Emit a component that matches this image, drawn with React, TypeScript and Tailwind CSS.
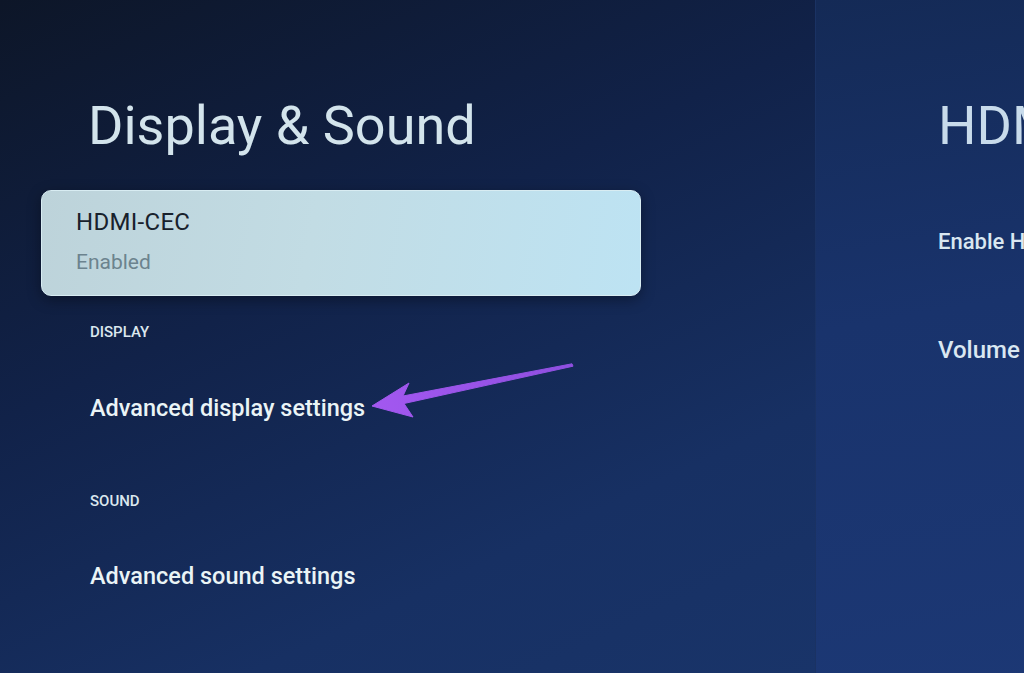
import React from "react";

export default function App() {
  return (
    <div
      className="relative flex h-[673px] w-[1024px] overflow-hidden"
      style={{ fontFamily: "Roboto, 'Noto Sans', sans-serif" }}
    >
      {/* Left panel */}
      <div className="flex w-[815px] shrink-0 flex-col bg-[linear-gradient(155deg,#0d1628_0%,#112249_40%,#173063_75%,#193469_100%)] pl-[41px] pt-[96px]">
        <h1 className="pl-[47px] text-[54px] font-normal leading-[60px] text-[#d3e4ec]">
          Display &amp; Sound
        </h1>

        <div className="mt-[34px] flex h-[106px] w-[600px] flex-col rounded-[10px] border border-[#d8ecf2] bg-[linear-gradient(100deg,#bdd3da_0%,#c2dce4_45%,#bde3f3_100%)] px-[34px] pt-[17px] shadow-[0_4px_14px_rgba(0,0,0,0.35)]">
          <div className="text-[24px] leading-[28px] tracking-[0.3px] text-[#18212c]">HDMI-CEC</div>
          <div className="mt-[12px] text-[21px] leading-[28px] text-[#6c838e]">Enabled</div>
        </div>

        <div className="pl-[49px]">
          <div className="mt-[26px] text-[15px] font-medium leading-[20px] text-[#dbe7ee]">DISPLAY</div>
          <div className="mt-[52px] text-[23.5px] font-medium leading-[28px] text-[#eaf4f6]">
            Advanced display settings
          </div>
          <div className="mt-[69px] text-[15px] font-medium leading-[20px] text-[#dbe7ee]">SOUND</div>
          <div className="mt-[51px] text-[23.5px] font-medium leading-[28px] text-[#eaf4f6]">
            Advanced sound settings
          </div>
        </div>
      </div>

      {/* Right panel */}
      <div className="flex flex-1 flex-col border-l border-[#1a3263] bg-[linear-gradient(170deg,#142a56_0%,#19336c_45%,#1c3875_100%)] pl-[122px] pt-[96px] whitespace-nowrap">
        <div className="text-[54px] leading-[60px] text-[#c8dbeb]">HDMI-CEC</div>
        <div className="mt-[72px] text-[22px] font-medium leading-[28px] text-[#dae7f1]">Enable HDMI-CEC</div>
        <div className="mt-[80px] text-[24px] font-medium leading-[28px] text-[#dae7f1]">Volume control</div>
      </div>

      {/* Annotation arrow */}
      <svg
        className="pointer-events-none absolute left-0 top-0"
        width="1024"
        height="673"
        viewBox="0 0 1024 673"
      >
        <defs>
          <linearGradient id="ag" x1="572" y1="365" x2="370" y2="407" gradientUnits="userSpaceOnUse">
            <stop offset="0" stopColor="#8f4fe0" />
            <stop offset="1" stopColor="#a358f0" />
          </linearGradient>
        </defs>
        <path
          d="M572 363.8 L403 396 L409 383 L372 406 L413 417 L404 403.5 L573 366.2 Z"
          fill="url(#ag)"
          stroke="url(#ag)"
          strokeWidth="1"
          strokeLinejoin="round"
        />
      </svg>
    </div>
  );
}
